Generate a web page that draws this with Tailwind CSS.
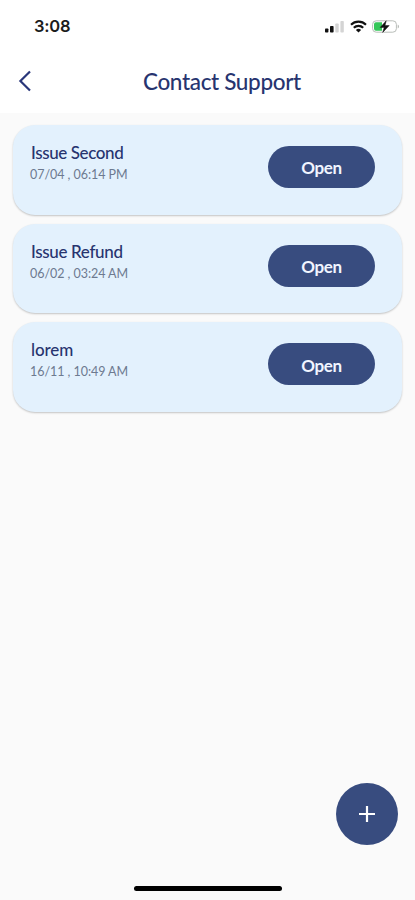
<!DOCTYPE html>
<html lang="en">
<head>
    <meta charset="UTF-8">
    <meta name="viewport" content="width=device-width, initial-scale=1.0">
    <title>Contact Support</title>
    <script src="https://cdn.jsdelivr.net/npm/@tailwindcss/browser@4"></script>
</head>
<body class="bg-[#fafafa] font-['Lato',sans-serif]">
<div class="relative flex flex-col w-[415px] h-[900px] overflow-hidden">
    <header class="bg-white h-[113px] shrink-0">
        <!-- Status bar -->
        <div class="flex items-center justify-between h-[52px] pl-[34px] pr-[15px]">
            <span class="font-['Inter',sans-serif] font-semibold text-[16.5px] tracking-[-0.2px] text-[#1c1c1c]">3:08</span>
            <div class="flex items-center">
                <svg class="w-[19px] h-[13px]" viewBox="0 0 19 13">
                    <rect x="0" y="8.5" width="3.4" height="4" rx="0.8" fill="#111"/>
                    <rect x="5" y="6" width="3.6" height="6.5" rx="0.8" fill="#111"/>
                    <rect x="10.3" y="3.5" width="3.4" height="9" rx="0.8" fill="#d4d4d4"/>
                    <rect x="15.4" y="1" width="3.4" height="11.5" rx="0.8" fill="#d4d4d4"/>
                </svg>
                <svg class="w-[17px] h-[13px] ml-[6px]" viewBox="0 0 17 13" fill="none" stroke="#111" stroke-width="2.1">
                    <path d="M1 4.7a10.6 10.6 0 0 1 15 0"/>
                    <path d="M3.8 7.8a6.6 6.6 0 0 1 9.4 0"/>
                    <path d="M8.5 12.6L5.9 10a3.7 3.7 0 0 1 5.2 0z" fill="#111" stroke="none"/>
                </svg>
                <svg class="w-[28px] h-[13px] ml-[5px]" viewBox="0 0 28 13">
                    <rect x="0.6" y="0.8" width="23.8" height="11.4" rx="3.6" fill="#fff" stroke="#b9bdb9"/>
                    <path d="M4 2.2h6v8.6H4a2 2 0 0 1-2-2V4.2a2 2 0 0 1 2-2z" fill="#35c759"/>
                    <path d="M25.7 4.4c1.8.7 1.8 3.5 0 4.2z" fill="#b9bdb9"/>
                    <path d="M14.2 0.8L8.2 7.4h4l-1.5 5 6.5-6.8h-4.2z" fill="#111" stroke="#111" stroke-width="0.5"/>
                </svg>
            </div>
        </div>
        <!-- Title bar -->
        <div class="flex items-center h-[58px] pl-[18px]">
            <button class="w-[14px] h-[22px]" aria-label="Back">
                <svg class="w-[14px] h-[22px]" viewBox="0 0 14 22" fill="none" stroke="#29367a" stroke-width="2.2">
                    <path d="M12 1.5L2.4 11 12 20.5"/>
                </svg>
            </button>
            <h1 class="ml-[111px] pt-[2px] text-[22.5px] font-medium leading-[30px] tracking-[-0.35px] text-[#27346f]">Contact Support</h1>
        </div>
    </header>

    <main class="flex flex-col gap-[9px] px-[13px] pt-[12px]">
        <div class="flex justify-between h-[89.7px] rounded-[22px] bg-[#e3f1fd] shadow-[0_1px_2px_rgba(0,0,0,0.22)] pl-[18px] pr-[27px]">
            <div class="pt-[18px]">
                <h2 class="text-[17px] font-medium leading-[20px] tracking-[-0.4px] text-[#27346f]">Issue Second</h2>
                <p class="-ml-px mt-[3px] text-[12.5px] leading-[18px] tracking-[-0.05px] text-[#6d7a90]">07/04 , 06:14 PM</p>
            </div>
            <button class="mt-[21px] w-[107px] h-[42px] pt-[2px] rounded-full bg-[#384c7f] text-[17px] font-bold tracking-[-0.3px] text-[#f1f5ff]">Open</button>
        </div>
        <div class="flex justify-between h-[89.7px] rounded-[22px] bg-[#e3f1fd] shadow-[0_1px_2px_rgba(0,0,0,0.22)] pl-[18px] pr-[27px]">
            <div class="pt-[18px]">
                <h2 class="text-[17px] font-medium leading-[20px] tracking-[-0.35px] text-[#27346f]">Issue Refund</h2>
                <p class="-ml-px mt-[3px] text-[12.5px] leading-[18px] tracking-[-0.05px] text-[#6d7a90]">06/02 , 03:24 AM</p>
            </div>
            <button class="mt-[21px] w-[107px] h-[42px] pt-[2px] rounded-full bg-[#384c7f] text-[17px] font-bold tracking-[-0.3px] text-[#f1f5ff]">Open</button>
        </div>
        <div class="flex justify-between h-[89.7px] rounded-[22px] bg-[#e3f1fd] shadow-[0_1px_2px_rgba(0,0,0,0.22)] pl-[18px] pr-[27px]">
            <div class="pt-[18px]">
                <h2 class="text-[17px] font-medium leading-[20px] tracking-[-0.1px] text-[#27346f]">lorem</h2>
                <p class="-ml-px mt-[3px] text-[12.5px] leading-[18px] tracking-[-0.05px] text-[#6d7a90]">16/11 , 10:49 AM</p>
            </div>
            <button class="mt-[21px] w-[107px] h-[42px] pt-[2px] rounded-full bg-[#384c7f] text-[17px] font-bold tracking-[-0.3px] text-[#f1f5ff]">Open</button>
        </div>
    </main>

    <!-- Floating add button -->
    <button class="absolute right-[17.5px] bottom-[55px] flex items-center justify-center w-[62px] h-[62px] rounded-full bg-[#384c7f]" aria-label="New issue">
        <svg class="w-[16px] h-[16px]" viewBox="0 0 16 16" stroke="#fff" stroke-width="2.2">
            <path d="M8 0v16M0 8h16"/>
        </svg>
    </button>

    <!-- Home indicator -->
    <div class="absolute bottom-[9px] left-[134px] w-[148px] h-[5px] rounded-full bg-black"></div>
</div>
</body>
</html>
